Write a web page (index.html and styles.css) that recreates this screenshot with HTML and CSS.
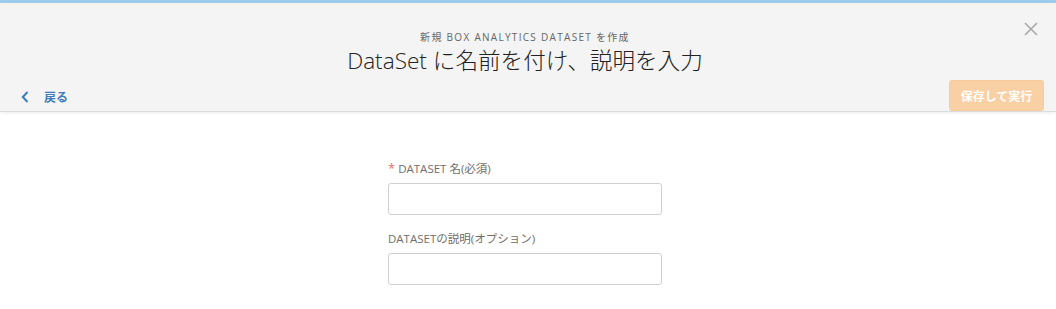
FILE: index.html
```html
<!DOCTYPE html>
<html lang="ja">
<head>
<meta charset="utf-8">
<link rel="stylesheet" href="styles.css">
</head>
<body>
<div class="topbar"></div>
<div class="stripe"></div>
<header class="header">
  <div class="header-top">
    <div class="subtitle">新規 BOX ANALYTICS DATASET を作成</div>
    <button class="close" aria-label="閉じる">
      <svg width="14" height="14" viewBox="0 0 14 14"><path d="M1 1L13 13M13 1L1 13" stroke="#a8a8a8" stroke-width="1.6" fill="none"/></svg>
    </button>
  </div>
  <h1 class="title">DataSet に名前を付け、説明を入力</h1>
  <div class="header-bottom">
    <a class="back" href="#">
      <svg width="8" height="12" viewBox="0 0 8 12"><path d="M6.5 1L1.8 6L6.5 11" stroke="#3d7dbb" stroke-width="2" fill="none"/></svg>
      <span>戻る</span>
    </a>
    <button class="save">保存して実行</button>
  </div>
</header>
<main class="form">
  <label class="label"><span class="req">*</span> DATASET 名(必須)</label>
  <input class="input" type="text">
  <label class="label second">DATASETの説明(オプション)</label>
  <input class="input" type="text">
</main>
</body>
</html>
```
FILE: styles.css
```css
* { box-sizing: border-box; }
body {
  margin: 0;
  background: #fff;
  font-family: "Open Sans", "Noto Sans CJK JP", sans-serif;
  color: #333;
}
.topbar { height: 3px; background: #9ccbee; }
.stripe { height: 2px; background: #fbf4ec; }
.header {
  background: #f4f4f4;
  height: 107px;
  border-bottom: 1px solid #dcdcdc;
  box-shadow: 0 1px 3px rgba(0,0,0,0.08);
  display: flex;
  flex-direction: column;
}
.header-top {
  display: flex;
  justify-content: center;
  position: relative;
  padding: 25px 6px 0 0;
}
.subtitle {
  font-size: 10px;
  letter-spacing: 1.3px;
  color: #666;
  line-height: 14px;
}
.close {
  position: absolute;
  right: 18px;
  top: 17px;
  border: 0;
  background: none;
  padding: 0;
  width: 14px;
  height: 14px;
  display: flex;
}
.title {
  margin: 2px 0 0;
  padding-right: 6px;
  text-align: center;
  font-weight: 300;
  font-size: 22.6px;
  line-height: 30px;
  color: #222;
}
.header-bottom {
  display: flex;
  justify-content: space-between;
  align-items: center;
  margin-top: 4px;
  padding: 0 12px 0 21px;
}
.back {
  display: flex;
  align-items: center;
  gap: 15px;
  color: #3d7dbb;
  text-decoration: none;
  font-size: 12px;
  font-weight: 600;
  padding-top: 2px;
}
.save {
  width: 95px;
  height: 31px;
  border: 1px solid #f7cb9c;
  border-radius: 3px;
  background: #f9d0a4;
  color: #fff;
  font-family: inherit;
  font-size: 12px;
  font-weight: 700;
  padding: 0;
}
.form {
  width: 274px;
  margin: 0 auto;
  padding-top: 49px;
  display: flex;
  flex-direction: column;
  align-items: stretch;
  position: relative;
  left: -3px;
}
.label {
  font-size: 11.5px;
  font-weight: 400;
  color: #6e6e6e;
  line-height: 16px;
  height: 16px;
  margin-bottom: 6px;
}
.label.second { margin-top: 16px; }
.req { color: #e8746a; font-size: 13px; line-height: 1; }
.input {
  height: 32px;
  border: 1px solid #cfcfcf;
  border-radius: 3px;
  background: #fff;
}
```
